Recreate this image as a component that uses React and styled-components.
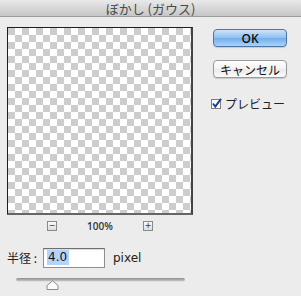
import React from 'react';
import styled, { createGlobalStyle } from 'styled-components';

const GlobalStyle = createGlobalStyle`
  html, body {
    margin: 0;
    padding: 0;
    background: #ececec;
  }
  body {
    font-family: "Lucida Grande", "DejaVu Sans", "Noto Sans CJK JP", sans-serif;
  }
`;

const Window = styled.div`
  width: 301px;
  height: 296px;
  background: #ececec;
  overflow: hidden;
`;

const TitleBar = styled.div`
  height: 16px;
  display: flex;
  align-items: center;
  justify-content: center;
  background: linear-gradient(#e9e9e9, #c6c6c6);
  border-bottom: 1px solid #9c9c9c;
  font-family: "Noto Sans CJK JP", "DejaVu Sans", sans-serif;
  font-size: 13px;
  color: #4a4a4a;
`;

const Content = styled.div`
  display: flex;
  padding: 10px 0 0 7px;
  gap: 20px;
`;

const LeftColumn = styled.div`
  width: 186px;
  display: flex;
  flex-direction: column;
`;

const Preview = styled.div`
  box-sizing: content-box;
  width: 183px;
  height: 185px;
  border-top: 1px solid #1e1e1e;
  border-left: 1px solid #1e1e1e;
  border-right: 2px solid #444;
  border-bottom: 2px solid #666;
  background: repeating-conic-gradient(#fff 0 25%, #cdcdcd 0 50%) 0 0 / 14px 14px;
`;

const ZoomRow = styled.div`
  display: flex;
  align-items: center;
  justify-content: center;
  gap: 28px;
  height: 12px;
  margin-top: 5px;
`;

const ZoomButton = styled.div`
  width: 8px;
  height: 8px;
  border: 1px solid #8a8a8a;
  background: linear-gradient(#fafafa, #dcdcdc);
  display: flex;
  align-items: center;
  justify-content: center;
  font-family: "DejaVu Sans", sans-serif;
  font-size: 8px;
  line-height: 1;
  color: #333;
`;

const ZoomLabel = styled.span`
  font-family: "Open Sans", "DejaVu Sans", sans-serif;
  font-size: 10px;
  font-weight: 600;
  color: #333;
  width: 30px;
  text-align: center;
`;

const RadiusRow = styled.div`
  display: flex;
  align-items: center;
  margin-top: 15px;
  height: 21px;
`;

const Label = styled.span`
  font-family: "Noto Sans CJK JP", "DejaVu Sans", sans-serif;
  font-size: 12px;
  color: #222;
  width: 36px;
`;

const Input = styled.div`
  width: 57px;
  height: 18px;
  border: 1px solid #8f8f8f;
  border-top-color: #6f6f6f;
  background: #fff;
  box-shadow: inset 0 1px 1px rgba(0, 0, 0, 0.15);
  display: flex;
  align-items: center;
  padding-left: 3px;
`;

const Selected = styled.span`
  background: #b4d3fc;
  font-family: "DejaVu Sans", sans-serif;
  font-size: 12px;
  color: #111;
  line-height: 15px;
  padding: 0 2px 0 1px;
`;

const Unit = styled.span`
  font-family: "DejaVu Sans", sans-serif;
  font-size: 12px;
  color: #222;
  margin-left: 8px;
`;

const SliderArea = styled.div`
  position: relative;
  margin: 10px 0 0 9px;
  width: 169px;
  height: 14px;
`;

const Track = styled.div`
  height: 3px;
  border-radius: 2px;
  background: linear-gradient(#8e8e8e, #c4c4c4);
  border-bottom: 1px solid #e0e0e0;
`;

const Thumb = styled.svg`
  position: absolute;
  left: 30px;
  top: 2px;
`;

const RightColumn = styled.div`
  width: 74px;
  display: flex;
  flex-direction: column;
  padding-top: 2px;
`;

const Button = styled.div`
  height: 18px;
  border-radius: 4px;
  display: flex;
  align-items: center;
  justify-content: center;
  font-size: 12px;
  color: #111;
  box-sizing: border-box;
  border: 1px solid ${p => (p.primary ? '#4f75a3' : '#9a9a9a')};
  background: ${p =>
    p.primary
      ? 'linear-gradient(#cde3f9 0%, #8dc0f0 50%, #72adea 51%, #a9d4fb 100%)'
      : 'linear-gradient(#ffffff 0%, #f3f3f3 50%, #e9e9e9 51%, #fbfbfb 100%)'};
  box-shadow: 0 1px 1px rgba(0, 0, 0, 0.15);
  font-family: ${p => (p.primary ? '"Open Sans", "DejaVu Sans", sans-serif' : '"Noto Sans CJK JP", sans-serif')};
  font-weight: ${p => (p.primary ? 600 : 'normal')};
  margin-top: ${p => p.top}px;
`;

const CheckRow = styled.div`
  display: flex;
  align-items: center;
  margin-top: 17px;
  margin-left: -2px;
  gap: 3px;
  font-family: "Noto Sans CJK JP", sans-serif;
  font-size: 12px;
  color: #222;
`;

function CheckBox() {
  return (
    <svg width="11" height="11" viewBox="0 0 11 11">
      <rect x="0.5" y="1.5" width="9" height="9" fill="#fff" stroke="#7f7f7f" />
      <path d="M2 5.5 L4.3 8.5 L10 0.8" fill="none" stroke="#1c3f8a" strokeWidth="2" />
    </svg>
  );
}

export default function App() {
  return (
    <Window>
      <GlobalStyle />
      <TitleBar>ぼかし (ガウス)</TitleBar>
      <Content>
        <LeftColumn>
          <Preview />
          <ZoomRow>
            <ZoomButton>−</ZoomButton>
            <ZoomLabel>100%</ZoomLabel>
            <ZoomButton>+</ZoomButton>
          </ZoomRow>
          <RadiusRow>
            <Label>半径 :</Label>
            <Input>
              <Selected>4.0</Selected>
            </Input>
            <Unit>pixel</Unit>
          </RadiusRow>
          <SliderArea>
            <Track />
            <Thumb width="13" height="10" viewBox="0 0 13 10">
              <path d="M1 9.5 L1 5.5 L6.5 0.8 L12 5.5 L12 9.5 Z" fill="#fbfbfb" stroke="#8a8a8a" />
            </Thumb>
          </SliderArea>
        </LeftColumn>
        <RightColumn>
          <Button primary top={0}>OK</Button>
          <Button top={13}>キャンセル</Button>
          <CheckRow>
            <CheckBox />
            プレビュー
          </CheckRow>
        </RightColumn>
      </Content>
    </Window>
  );
}
